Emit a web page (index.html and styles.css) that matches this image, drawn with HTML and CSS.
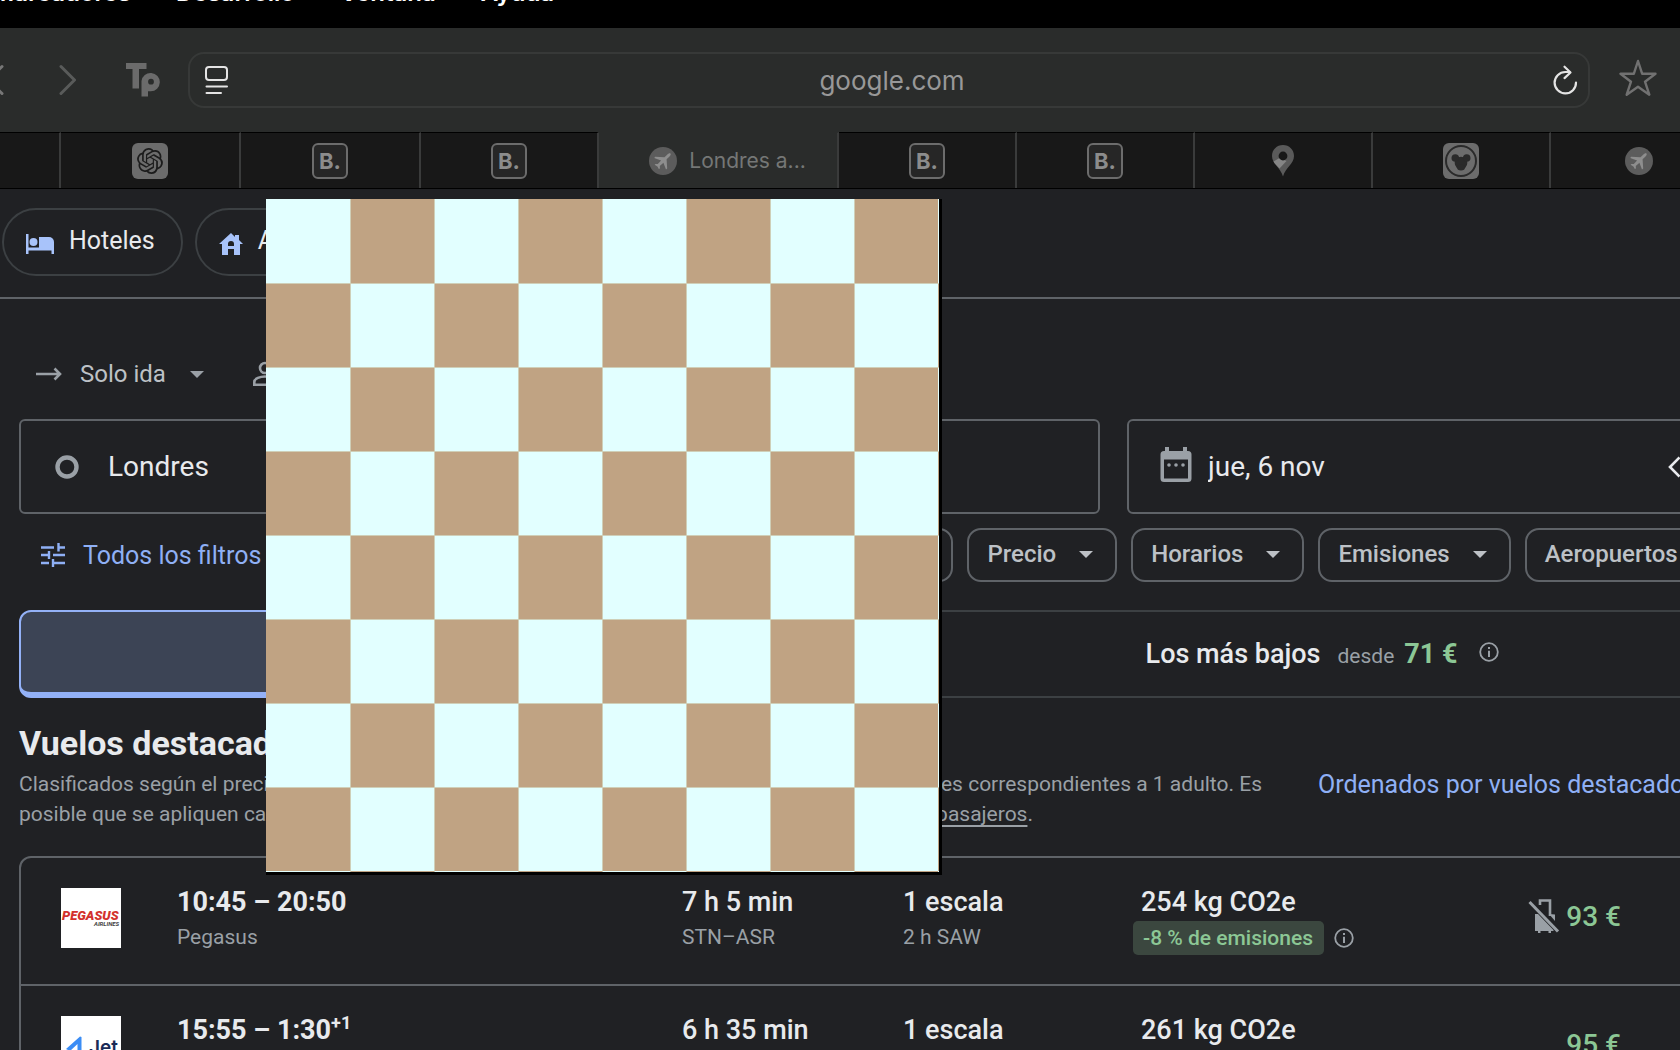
FILE: index.html
```html
<!DOCTYPE html>
<html lang="es">
<head>
<meta charset="utf-8">
<title>Londres a Kayseri | Google Flights</title>
<link rel="stylesheet" href="styles.css">
</head>
<body>
<svg class="defs" aria-hidden="true">
  <symbol id="i-plane" viewBox="0 0 28 28">
    <circle cx="14" cy="14" r="14" fill="#5c5c5c"/>
    <path d="M21.500 6.500c-1-.7-2.300.2-3.100 1l-2.900 2.800-9.300-.6-1 1.200 6.900 2.600-3.300 3.600-2.300-.2-.9.900 2.800 1.600 1.600 2.800.9-.9-.1-2.300 3.600-3.300 2.600 6.800 1.200-1-.6-9.200 2.900-2.900c.8-.8 1.700-2.100 1-2.900z" fill="#8e8e8e"/>
  </symbol>
  <symbol id="i-info" viewBox="0 0 20 20">
    <circle cx="10" cy="10" r="8.800" fill="none" stroke="currentColor" stroke-width="1.800"/>
    <path d="M9 8.800h2V15H9zM9 5h2v2H9z" fill="currentColor"/>
  </symbol>
  <symbol id="i-caret" viewBox="0 0 14 7"><path d="M0 0h14L7 7z" fill="currentColor"/></symbol>
</svg>

<header class="browser">
  <nav class="menubar"><span>Marcadores</span><span>Desarrollo</span><span>Ventana</span><span>Ayuda</span></nav>
  <div class="toolbar">
    <button class="nav-btn back" aria-label="Atrás"><svg width="18" height="32" viewBox="0 0 18 32"><path d="M16 2.500 2.500 16 16 29.500" fill="none" stroke="#777" stroke-width="3" stroke-linecap="round"/></svg></button>
    <button class="nav-btn forward" aria-label="Adelante"><svg width="18" height="32" viewBox="0 0 18 32"><path d="M2 2.500 15.500 16 2 29.500" fill="none" stroke="#595b5a" stroke-width="3" stroke-linecap="round" stroke-linejoin="round"/></svg></button>
    <button class="nav-btn ext" aria-label="Tp"><svg width="34" height="34" viewBox="0 0 34 34"><g fill="#6b6b6b"><path d="M0 0h20.500v6H13v19.500H6.500V6H0z"/><path fill-rule="evenodd" d="M15.500 33.500V18a9.200 9.200 0 1 1 9.300 10.300H22v5.200zM25 15.800a2.900 2.900 0 1 0 0 5.800 2.900 2.900 0 0 0 0-5.800z"/></g></svg></button>
    <div class="address">
      <svg width="24" height="30" viewBox="0 0 24 30" fill="none" stroke="#e4e4e4" stroke-width="2" stroke-linecap="round"><rect x="1" y="2" width="21" height="13" rx="3"/><path d="M1.500 21.500h20.500M1.500 28H16"/></svg>
      <input class="url" type="text" value="google.com" aria-label="Dirección">
      <button class="nav-btn" aria-label="Recargar"><svg width="25" height="30" viewBox="0 0 25 30" fill="none" stroke="#e4e4e4" stroke-width="2.200" stroke-linecap="round" stroke-linejoin="round"><path d="M23 17.500a10.700 10.700 0 1 1-10.700-10.500h4.500"/><path d="m11.500 1.700 6 5.800-6 5.600"/></svg></button>
    </div>
    <button class="nav-btn star" aria-label="Favoritos"><svg width="38" height="38" viewBox="0 0 38 38"><path d="m19 2 4.200 12.800H36.500L26 22.700l4.300 13L19 27.800 7.700 35.700l4.300-13L1.500 14.800h13.300z" fill="none" stroke="#717171" stroke-width="2.400" stroke-linejoin="round"/></svg></button>
  </div>
  <div class="tabs">
    <div class="tab"></div>
    <div class="tab"><svg width="36" height="36" viewBox="0 0 36 36"><rect width="36" height="36" rx="6" fill="#6c6c6c"/><path transform="translate(5 5) scale(1.080)" fill="#1c1c1c" d="M22.282 9.821a5.985 5.985 0 0 0-.516-4.910 6.046 6.046 0 0 0-6.510-2.900A6.065 6.065 0 0 0 4.981 4.180a5.985 5.985 0 0 0-3.998 2.900 6.046 6.046 0 0 0 .743 7.097 5.980 5.980 0 0 0 .510 4.911 6.051 6.051 0 0 0 6.515 2.900A5.985 5.985 0 0 0 13.260 24a6.056 6.056 0 0 0 5.772-4.206 5.990 5.990 0 0 0 3.998-2.900 6.056 6.056 0 0 0-.748-7.073zM13.260 22.430a4.476 4.476 0 0 1-2.876-1.040l.141-.081 4.779-2.758a.795.795 0 0 0 .392-.681v-6.737l2.020 1.168a.071.071 0 0 1 .038.052v5.583a4.504 4.504 0 0 1-4.494 4.494zM3.600 18.304a4.470 4.470 0 0 1-.535-3.014l.142.085 4.783 2.759a.771.771 0 0 0 .780 0l5.843-3.369v2.332a.080.080 0 0 1-.033.062L9.740 19.950a4.500 4.500 0 0 1-6.140-1.646zM2.340 7.896a4.485 4.485 0 0 1 2.366-1.973V11.600a.766.766 0 0 0 .388.676l5.815 3.355-2.020 1.168a.076.076 0 0 1-.071 0l-4.830-2.786A4.504 4.504 0 0 1 2.340 7.872zm16.597 3.855-5.833-3.387L15.119 7.200a.076.076 0 0 1 .071 0l4.830 2.791a4.494 4.494 0 0 1-.676 8.105v-5.678a.790.790 0 0 0-.407-.667zm2.010-3.023-.141-.085-4.774-2.782a.776.776 0 0 0-.785 0L9.409 9.230V6.897a.066.066 0 0 1 .028-.061l4.830-2.787a4.500 4.500 0 0 1 6.680 4.660zm-12.640 4.135-2.020-1.164a.080.080 0 0 1-.038-.057V6.075a4.500 4.500 0 0 1 7.375-3.453l-.142.080L8.704 5.460a.795.795 0 0 0-.393.681zm1.097-2.365 2.602-1.500 2.607 1.500v2.999l-2.597 1.500-2.607-1.500z"/></svg></div>
    <div class="tab"><span class="bfav">B.</span></div>
    <div class="tab"><span class="bfav">B.</span></div>
    <div class="tab active"><svg width="28" height="28"><use href="#i-plane"/></svg><span>Londres a...</span></div>
    <div class="tab"><span class="bfav">B.</span></div>
    <div class="tab"><span class="bfav">B.</span></div>
    <div class="tab"><svg width="22" height="32" viewBox="0 0 22 32"><path d="M11 0C4.800 0 0 4.800 0 10.900c0 8.200 8.300 11 11 20.600 2.700-9.600 11-12.400 11-20.600C22 4.800 17.200 0 11 0z" fill="#5a5a5a"/><path d="m1.500 16.500 6-3.500 7 3-7 7.500C5 20.500 2.700 18.800 1.500 16.500z" fill="#858585"/><circle cx="11" cy="11" r="4.400" fill="#181818"/></svg></div>
    <div class="tab"><svg width="36" height="36" viewBox="0 0 36 36"><rect width="36" height="36" rx="6" fill="#6c6c6c"/><circle cx="18" cy="18" r="15" fill="none" stroke="#2a2a2a" stroke-width="2"/><g fill="#2a2a2a"><circle cx="18" cy="20" r="6.300"/><circle cx="12.300" cy="15" r="3.800"/><circle cx="23.700" cy="15" r="3.800"/><ellipse cx="18" cy="24.500" rx="4" ry="3"/></g></svg></div>
    <div class="tab last"><svg width="28" height="28"><use href="#i-plane"/></svg></div>
  </div>
</header>

<main class="page">
  <nav class="products">
    <a class="product" href="#hoteles"><svg width="30" height="22" viewBox="0 0 30 22" fill="#a8c3fa"><path d="M1 1h2.500v13.500H29V21h-2.500v-3.500h-23V21H1z"/><circle cx="8.500" cy="9" r="4"/><path d="M14 4h10a5 5 0 0 1 5 5v8H14z"/></svg><span>Hoteles</span></a>
    <a class="product" href="#alojamientos"><svg width="26" height="24" viewBox="0 0 26 24" fill="#a8c3fa"><path fill-rule="evenodd" d="M13 1 1 12h3v11h6v-6h6v6h6V12h3l-4-4V3h-4v2zM10 14v-2a3 3 0 0 1 6 0v2z"/></svg><span>Alojamientos</span></a>
  </nav>

  <div class="content">
    <div class="options">
      <button class="option"><svg width="26" height="14" viewBox="0 0 26 14" fill="none" stroke="#9aa0a6" stroke-width="2.600"><path d="M0 7h24M18.500 1.500 24 7l-5.500 5.500"/></svg><span class="triptype">Solo ida</span><svg width="14" height="7"><use href="#i-caret"/></svg></button>
      <button class="option"><svg width="26" height="26" viewBox="0 0 26 26" fill="none" stroke="#9aa0a6" stroke-width="2.600"><circle cx="13" cy="7" r="5"/><path d="M2.300 23.700V21c0-3.500 6-5.500 10.700-5.500s10.700 2 10.700 5.500v2.700z"/></svg><span>1</span></button>
    </div>

    <div class="search">
      <label class="field"><svg width="24" height="24" viewBox="0 0 24 24"><circle cx="12" cy="12" r="9.500" fill="none" stroke="#9aa0a6" stroke-width="4.400"/></svg><input class="place" type="text" value="Londres" aria-label="Origen"></label>
      <label class="field date"><svg width="32" height="36" viewBox="0 0 32 36"><path fill="#9aa0a6" fill-rule="evenodd" d="M5 0h4v4h14V0h4v4h1a3.500 3.500 0 0 1 3.500 3.500v24A3.500 3.500 0 0 1 28 35H4a3.500 3.500 0 0 1-3.500-3.500v-24A3.500 3.500 0 0 1 4 4h1zM4 12.500V31.500h24V12.500z"/><g fill="#9aa0a6"><circle cx="9" cy="18" r="1.800"/><circle cx="16" cy="18" r="1.800"/><circle cx="23" cy="18" r="1.800"/></g></svg><input type="text" value="jue, 6 nov" aria-label="Salida"><svg width="14" height="22" viewBox="0 0 14 22"><path d="M12.500 1.500 3 11l9.500 9.500" fill="none" stroke="#e8eaed" stroke-width="2.600"/></svg></label>
    </div>

    <div class="filters">
      <button class="allfilters"><svg width="24" height="24" viewBox="0 0 24 24" stroke="#8fb0f5" stroke-width="2.400" fill="none"><path d="M0 4.500h13M17.500 0v8.500M17.500 4.500H24M0 12h8M8 8v8M12 12h12M0 20h8M12 16v8M12 20h12"/></svg><span>Todos los filtros</span></button>
      <div class="chips">
        <button class="chip"><span>Aerolíneas</span><svg width="14" height="7"><use href="#i-caret"/></svg></button>
        <button class="chip"><span>Precio</span><svg width="14" height="7"><use href="#i-caret"/></svg></button>
        <button class="chip"><span>Horarios</span><svg width="14" height="7"><use href="#i-caret"/></svg></button>
        <button class="chip"><span>Emisiones</span><svg width="14" height="7"><use href="#i-caret"/></svg></button>
        <button class="chip"><span>Aeropuertos de conexión</span></button>
      </div>
    </div>

    <div class="sorttabs">
      <button class="sorttab selected" aria-label="Los mejores"></button>
      <button class="sorttab"><span class="sortname">Los más bajos</span><span class="from">desde</span><span class="lowest">71 €</span><svg class="info" width="20" height="20"><use href="#i-info"/></svg></button>
    </div>

    <h2>Vuelos destacados</h2>
    <div class="notes">
      <div class="legal">
        <p class="line long"><span>Clasificados según el precio y la comodidad</span><span>cargos y tasas habituales correspondientes a 1 adulto. Es</span></p>
        <p class="line short"><span>posible que se apliquen cargos opcionales</span><span><a href="#pasajeros">Asistencia para pasajeros</a>.</span></p>
      </div>
      <a class="sortlink" href="#orden">Ordenados por vuelos destacados</a>
    </div>

    <ul class="flights">
      <li class="flight">
        <svg class="logo" width="60" height="60" viewBox="0 0 60 60"><rect width="60" height="60" fill="#fff"/><text x="1" y="32" class="pegasus">PEGASUS</text><text x="33" y="38" class="airlines">AIRLINES</text></svg>
        <div class="times"><strong>10:45 – 20:50</strong><small>Pegasus</small></div>
        <div><span class="main">7 h 5 min</span><small>STN–ASR</small></div>
        <div><span class="main">1 escala</span><small>2 h SAW</small></div>
        <div><span class="main">254 kg CO2e</span><div class="emission"><span class="badge">-8 % de emisiones</span><svg class="info" width="20" height="20"><use href="#i-info"/></svg></div></div>
        <div class="price"><svg width="32" height="36" viewBox="0 0 32 36"><path d="M12 7V2.500h10V18" fill="none" stroke="#9aa0a6" stroke-width="2.600"/><path d="M7 16h3l15.500 16v1H23v2h-2.500v-2h-8v2H10v-2H7z" fill="#9aa0a6"/><path d="m21 16 6 .5V23z" fill="#9aa0a6"/><path d="m1.500 4 28.500 29.500" stroke="#9aa0a6" stroke-width="3"/></svg><span>93 €</span></div>
      </li>
      <li class="flight">
        <svg class="logo" width="60" height="60" viewBox="0 0 60 60"><rect width="60" height="60" fill="#fff"/><path d="M5 33 19 20.500l1.500.5v17h-4V28L9 35z" fill="#3b8df5"/><text x="28" y="38" class="jet">Jet</text></svg>
        <div class="times"><strong>15:55 – 1:30<sup>+1</sup></strong><small>AJet</small></div>
        <div><span class="main">6 h 35 min</span><small>STN–ASR</small></div>
        <div><span class="main">1 escala</span><small>1 h SAW</small></div>
        <div><span class="main">261 kg CO2e</span></div>
        <div class="price"><span>95 €</span></div>
      </li>
    </ul>
  </div>
</main>

<div class="board" role="img" aria-label="Tablero de ajedrez"></div>
</body>
</html>
```
FILE: styles.css
```css
* { box-sizing: border-box; }
body {
  margin: 0;
  height: 100vh;
  overflow: hidden;
  position: relative;
  background: #202124;
  color: #e8eaed;
  font-family: Roboto, "Liberation Sans", sans-serif;
  font-size: 24px;
}
button, input { font: inherit; color: inherit; background: none; border: 0; padding: 0; margin: 0; }
input { min-width: 0; outline: 0; }
svg { flex: none; display: block; }
a { color: inherit; }
.defs { display: none; }

/* Browser chrome */
.browser { font-family: Inter, "Liberation Sans", sans-serif; }
.menubar {
  display: flex;
  gap: 45px;
  height: 28px;
  margin-left: -8px;
  overflow: hidden;
  background: #000;
  color: #fff;
  font-weight: 600;
  line-height: 28px;
}
.menubar span { margin-top: -21px; }
.toolbar {
  display: flex;
  align-items: center;
  height: 104px;
  background: #2a2c2b;
}
.nav-btn { flex: none; display: flex; }
.back { margin-left: -14px; }
.forward { margin-left: 55px; }
.ext { margin-left: 49px; }
.address {
  flex: 1;
  display: flex;
  align-items: center;
  height: 56px;
  margin: 0 29px 0 28px;
  padding: 0 10px 0 15px;
  border: 2px solid #373938;
  border-radius: 16px;
}
.url { flex: 1; padding-left: 2px; text-align: center; font-size: 26px; color: #989898; }
.star { margin: 0 23px 4px 0; }
.tabs {
  display: grid;
  grid-template-columns: 61fr 180fr 180fr 178fr 240fr 178fr 178fr 178fr 178fr 129fr;
  height: 57px;
  border-bottom: 1px solid #000;
}
.tab {
  display: flex;
  align-items: center;
  justify-content: center;
  gap: 12px;
  min-width: 0;
  background: #181818;
  border-top: 1px solid #000;
  border-right: 2px solid #3a3b3b;
  font-size: 22px;
  color: #757776;
  white-space: nowrap;
}
.tab.active { background: #2a2c2b; border-top-color: #2a2c2b; padding-left: 19px; font-size: 21px; }
.tab.last { padding-left: 46px; border-right: 0; }
.bfav {
  width: 36px;
  height: 36px;
  border: 2px solid #6c6c6c;
  border-radius: 6px;
  background: #262626;
  color: #8c8c8c;
  font-weight: 700;
  line-height: 32px;
  text-align: center;
}

/* Flights page */
.products {
  display: flex;
  gap: 12px;
  padding: 19px 2px;
  height: 110px;
  border-bottom: 2px solid #5f6368;
}
.product {
  display: flex;
  align-items: center;
  gap: 14px;
  height: 68px;
  padding: 0 26px 4px 21px;
  border: 2px solid #3c4043;
  border-radius: 34px;
  color: #e8eaed;
  font-size: 25px;
  text-decoration: none;
}
.product svg { margin-top: 7px; }
.content { margin: 0 -77px 0 19px; }
.options { display: flex; gap: 48px; padding: 59px 17px 0; height: 120px; color: #bdc1c6; }
.option { display: flex; align-items: center; gap: 18px; height: 32px; color: #9aa0a6; }
.triptype { margin-right: 6px; color: #bdc1c6; }
.search { display: grid; grid-template-columns: 1081fr 630fr; gap: 27px; }
.field {
  display: flex;
  align-items: center;
  gap: 16px;
  height: 95px;
  padding: 0 34px;
  border: 2px solid #5f6368;
  border-radius: 6px;
  font-size: 28px;
}
.field input { flex: 1; }
.place { padding-left: 13px; }
.date { padding: 0 74px 0 31px; }
.date svg:first-child { margin-bottom: 4px; }
.filters {
  display: flex;
  align-items: center;
  padding: 14px 0 28px 22px;
  color: #bdc1c6;
}
.allfilters { flex: none; display: flex; align-items: center; gap: 18px; width: 717px; font-size: 25px; color: #8fb0f5; white-space: nowrap; }
.chips { display: flex; gap: 14px; font-weight: 500; }
.chip {
  flex: none;
  display: flex;
  align-items: center;
  gap: 23px;
  height: 54px;
  padding: 0 22px 2px 18px;
  border: 2px solid #5f6368;
  border-radius: 14px;
  white-space: nowrap;
}
.sorttabs { display: grid; grid-template-columns: 1fr 1fr; height: 88px; }
.sorttab {
  display: flex;
  align-items: center;
  justify-content: center;
  border: 2px solid #3c4043;
  border-radius: 0 12px 12px 0;
}
.sorttab.selected { border: 2px solid #93b1f7; border-bottom-width: 6px; border-radius: 12px 0 0 12px; background: #3c4455; }
.sortname { font-size: 27px; font-weight: 500; }
.from { margin: 4px 10px 0 17px; font-size: 21px; color: #9aa0a6; }
.lowest { font-size: 27px; font-weight: 700; color: #8cc795; }
.info { color: #9aa0a6; }
.lowest + .info { margin: 0 0 4px 22px; }
h2 { margin: 23px 0 0; font-size: 34px; font-weight: 700; line-height: 44px; }
.notes { display: flex; align-items: flex-start; gap: 56px; }
.legal { width: 1243px; font-size: 21px; line-height: 30px; color: #9aa0a6; white-space: nowrap; padding-top: 4px; }
.line { display: flex; justify-content: space-between; margin: 0; }
.short { width: 1014px; }
.legal a { text-underline-offset: 4px; text-decoration-thickness: 2px; }
.sortlink { padding-top: 2px; color: #8fb0f5; font-size: 25px; line-height: 36px; text-decoration: none; white-space: nowrap; }
.flights { list-style: none; margin: 27px 0 0; padding: 0; border: 2px solid #5f6368; border-radius: 12px; }
.flight {
  display: grid;
  grid-template-columns: 116px 505px 221px 238px 1fr 150px;
  height: 128px;
  padding: 27px 134px 0 40px;
  border-bottom: 2px solid #5f6368;
  white-space: nowrap;
}
.logo { margin-top: 3px; }
.flight strong, .main { display: block; font-size: 27px; font-weight: 500; line-height: 34px; }
.flight strong { font-weight: 700; }
.flight small { display: block; padding-top: 1px; font-size: 21px; line-height: 34px; color: #9aa0a6; }
sup { font-size: 18px; line-height: 0; vertical-align: 10px; }
.emission { display: flex; align-items: center; gap: 10px; margin: 2px 0 0 -8px; }
.badge { height: 34px; padding: 0 11px 0 10px; border-radius: 5px; background: #3b473f; color: #8cc795; font-size: 21px; font-weight: 500; line-height: 34px; }
.price { display: flex; align-items: center; justify-content: flex-end; gap: 6px; height: 62px; font-size: 28px; font-weight: 500; color: #8cc795; }
.pegasus { font: italic 900 13px Roboto, sans-serif; fill: #d3322d; }
.airlines { font: italic 700 6px Roboto, sans-serif; fill: #444; }
.jet { font: 600 19px Inter, sans-serif; fill: #1a2b57; }

/* Chess board window floating over the browser */
.board {
  position: absolute;
  left: 266px;
  top: 199px;
  width: 676px;
  height: 676px;
  border: solid #000;
  border-width: 0 3px 3px 0;
  background:
    repeating-linear-gradient(90deg, #cfcfb8 0 1px, transparent 1px 84px) 84px 0 / 588px 100% no-repeat,
    repeating-linear-gradient(#cfcfb8 0 1px, transparent 1px 84px) 0 84px / 100% 588px no-repeat,
    conic-gradient(#c0a383 25%, #e2ffff 0 50%, #c0a383 0 75%, #e2ffff 0) 0 0 / 168px 168px;
}
```
